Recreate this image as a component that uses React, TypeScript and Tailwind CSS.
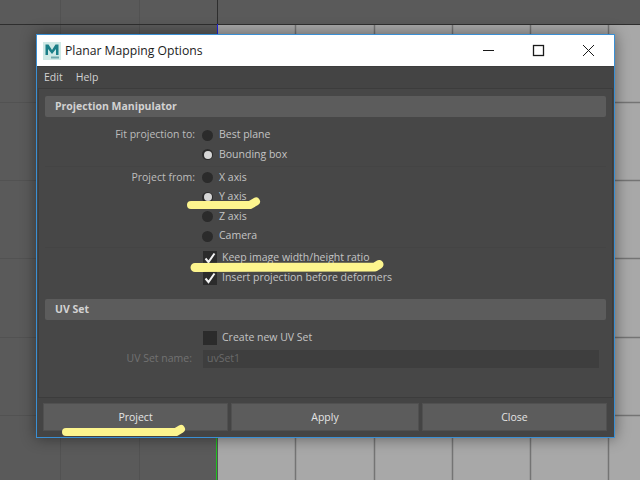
import React from "react";

const font = { fontFamily: '"Open Sans", "Noto Sans", sans-serif' };

function Radio({ on }: { on?: boolean }) {
  return (
    <span className="flex w-[11px] h-[11px] rounded-full bg-[#2b2b2b] items-center justify-center shrink-0">
      {on && <span className="block w-[8px] h-[8px] rounded-full bg-[#d6d6d6]" />}
    </span>
  );
}

function RadioRow({ label, text, on }: { label?: string; text: string; on?: boolean }) {
  return (
    <div className="flex items-center h-[19.5px]">
      <span className="w-[150px] text-right text-[#bdbdbd]">{label}</span>
      <span className="ml-[7px]"><Radio on={on} /></span>
      <span className="ml-[6px] text-[#c4c4c4]">{text}</span>
    </div>
  );
}

function Check({ on }: { on?: boolean }) {
  return (
    <span className="flex w-[14px] h-[14px] bg-[#2b2b2b] items-center justify-center shrink-0">
      {on && (
        <svg width="12" height="12" viewBox="0 0 12 12">
          <path d="M1.5 6.5 L4.5 10 L10.5 1.5" fill="none" stroke="#f2f2f2" strokeWidth="2" />
        </svg>
      )}
    </span>
  );
}

function CheckRow({ text, on }: { text: string; on?: boolean }) {
  return (
    <div className="flex items-center h-5 pl-[158px]">
      <Check on={on} />
      <span className="ml-[5px] text-[#c4c4c4]">{text}</span>
    </div>
  );
}

function Header({ children }: { children: React.ReactNode }) {
  return (
    <div className="h-[21px] mx-[6px] flex items-center pl-[10px] bg-[#5c5c5c] rounded-[2px] font-bold text-[#d2d2d2]">
      {children}
    </div>
  );
}

function Btn({ children, w }: { children: React.ReactNode; w: string }) {
  return (
    <div className={`${w} h-[28px] flex items-center justify-center pt-[2px] bg-[#5c5c5c] text-[#e4e4e4] border border-[#505050]`}>
      {children}
    </div>
  );
}

function Canvas() {
  const vx = [60, 139, 217, 295, 374, 452, 530, 608];
  const hy = [24, 102, 180, 258, 337, 415];
  return (
    <svg className="absolute inset-0" width="640" height="480">
      <rect width="640" height="480" fill="#5a5a5a" />
      <rect x="217" y="24" width="423" height="456" fill="#a8a8a8" />
      {vx.map((x) => (
        <line key={x} x1={x + 0.5} x2={x + 0.5} y1={x > 217 ? 24 : 0} y2="480" stroke={x > 217 ? "#747474" : "#525252"} strokeWidth={x > 217 ? 1.5 : 1} />
      ))}
      {hy.map((y) => (
        <line key={y} x1="0" x2="218" y1={y + 0.5} y2={y + 0.5} stroke={y === 24 ? "#2e2e2e" : "#525252"} />
      ))}
      {hy.map((y) => (
        <line key={y} x1="218" x2="640" y1={y + 0.5} y2={y + 0.5} stroke={y === 24 ? "#2e2e2e" : "#747474"} strokeWidth={y === 24 ? 1 : 1.5} />
      ))}
      <line x1="217.5" x2="217.5" y1="0" y2="24" stroke="#2e2e2e" />
      <line x1="217.5" x2="217.5" y1="24" y2="34" stroke="#2020e0" />
      <line x1="216.5" x2="216.5" y1="438" y2="480" stroke="#20c020" />
    </svg>
  );
}

function Highlights() {
  return (
    <svg className="absolute inset-0 pointer-events-none" width="640" height="480">
      <g fill="none" stroke="#fdf58e" strokeLinecap="round" strokeLinejoin="round">
        <path d="M191 205 L250 205 L256 201.5" strokeWidth="8" />
        <path d="M195 267.5 L375 267 L379 264.5" strokeWidth="9" />
        <path d="M66 432 L176 432 L181 429" strokeWidth="8" />
      </g>
    </svg>
  );
}

function Logo() {
  return (
    <svg width="18" height="18" viewBox="0 0 18 18" className="shrink-0">
      <rect width="18" height="18" fill="#cfe9e6" />
      <path d="M2.5 13 V2.5 H5.5 L9 8 L12.5 2.5 H15.5 V13 H13 V7 L9 12 L5 7 V13 Z" fill="#1b7f88" />
      <rect x="8" y="14.5" width="8" height="2" fill="#6fa9ac" />
    </svg>
  );
}

export default function App() {
  return (
    <div className="relative w-[640px] h-[480px] overflow-hidden text-[10.5px]" style={font}>
      <Canvas />
      <div className="absolute left-[36px] top-[34px] w-[579px] h-[404px] flex flex-col border border-[#3a8fd4] bg-[#444444] shadow-[0_0_14px_rgba(0,0,0,0.45)]">
        <div className="h-[32px] shrink-0 bg-white border-b border-[#3c3c3c] flex items-center pl-[6px] text-[#1c1c1c]">
          <Logo />
          <span className="ml-[4px] pt-[2px] text-[12.2px]">Planar Mapping Options</span>
          <svg width="113" height="16" viewBox="0 0 113 16" className="ml-auto mr-[19px]">
            <g fill="none" stroke="#1a1a1a" strokeWidth="1">
              <path d="M1 7.5 H12" />
              <rect x="51.5" y="2.5" width="10" height="10" strokeWidth="1.3" />
              <path d="M101 2 L112 13 M112 2 L101 13" />
            </g>
          </svg>
        </div>
        <div className="h-[21px] shrink-0 flex items-center gap-[13px] pl-[7px] text-[#d2d2d2]">
          <span>Edit</span>
          <span>Help</span>
        </div>
        <div className="ml-[1px] mr-[1px] h-[310px] shrink-0 bg-[#474747] border-l border-r border-b border-t border-[#3c3c3c] pt-[7px]">
          <Header>Projection Manipulator</Header>
          <div className="mx-[6px] pt-[8.5px] pb-[1px] border-b border-[#444444]">
            <RadioRow label="Fit projection to:" text="Best plane" />
            <RadioRow text="Bounding box" on />
          </div>
          <div className="mx-[6px] pt-[1.5px] pb-[1px] border-b border-[#444444]">
            <RadioRow label="Project from:" text="X axis" />
            <RadioRow text="Y axis" on />
            <RadioRow text="Z axis" />
            <RadioRow text="Camera" />
          </div>
          <div className="mx-[6px] pb-[11px]">
            <CheckRow text="Keep image width/height ratio" on />
            <CheckRow text="Insert projection before deformers" on />
          </div>
          <Header>UV Set</Header>
          <div className="mx-[6px] pt-[8px]">
            <CheckRow text="Create new UV Set" />
            <div className="flex items-center h-[20px] mt-[1px]">
              <span className="w-[147px] text-right text-[#727272]">UV Set name:</span>
              <div className="ml-[11px] w-[396px] h-[18px] bg-[#3e3e3e] flex items-center pl-[4px] text-[#6a6a6a]">uvSet1</div>
            </div>
          </div>
        </div>
        <div className="flex gap-[3px] pl-[6px] pt-[5px]">
          <Btn w="w-[185px]">Project</Btn>
          <Btn w="w-[188px]">Apply</Btn>
          <Btn w="w-[185px]">Close</Btn>
        </div>
      </div>
      <Highlights />
    </div>
  );
}
